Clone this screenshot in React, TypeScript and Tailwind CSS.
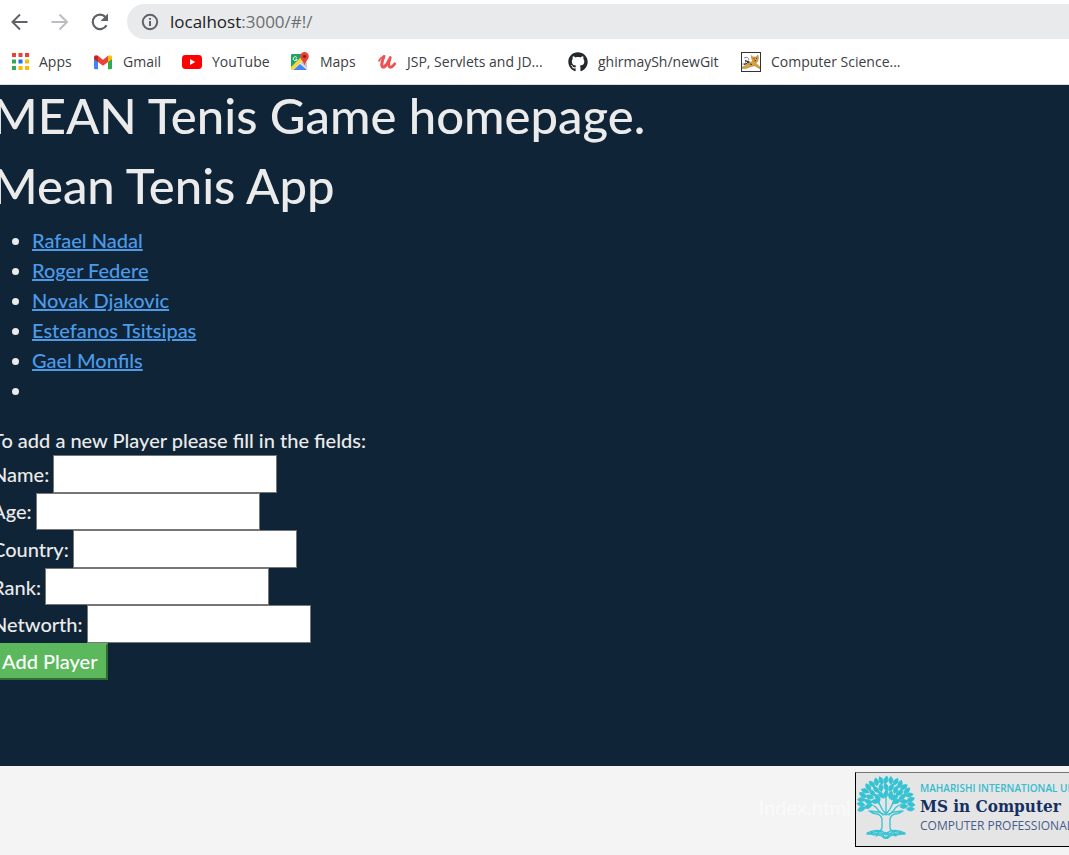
import React from "react";
import { FaGithub } from "react-icons/fa";

const APP_DOTS = [
  "#ea4335", "#ea4335", "#ea4335",
  "#34a853", "#1a73e8", "#fbbc04",
  "#34a853", "#fbbc04", "#fbbc04",
];

function AppsIcon() {
  return (
    <svg viewBox="0 0 20 20" className="size-5" aria-hidden="true">
      {APP_DOTS.map((color, i) => (
        <rect key={i} x={3 + (i % 3) * 6.5} y={1 + Math.floor(i / 3) * 6.5} width="4" height="4" fill={color} />
      ))}
    </svg>
  );
}

function GmailIcon() {
  return (
    <svg viewBox="0 0 20 20" className="size-5" aria-hidden="true">
      <path d="M1 5.5V16q0 1.2 1.2 1.2H5V9z" fill="#4285f4" />
      <path d="M19 5.5V16q0 1.2-1.2 1.2H15V9z" fill="#34a853" />
      <path d="M1 7V5.3C1 3.2 3.3 2.5 5 3.8V10z" fill="#c5221f" />
      <path d="M19 7V5.3c0-2.1-2.3-2.8-4-1.5V10z" fill="#fbbc04" />
      <path d="M5 3.8l5 3.9 5-3.9V10l-5 3.8L5 10z" fill="#ea4335" />
    </svg>
  );
}

function YoutubeIcon() {
  return (
    <svg viewBox="0 0 20 20" className="size-5" aria-hidden="true">
      <rect y="3" width="20" height="14" rx="3.4" fill="#f00" />
      <path d="M8 7v6l5.3-3z" fill="#fff" />
    </svg>
  );
}

function MapsIcon() {
  return (
    <svg viewBox="0 0 20 20" className="size-5" aria-hidden="true">
      <rect x="1" y="2" width="16" height="16" rx="1.5" fill="#e3e5e8" />
      <path d="M2.500 2H14L1 15V3.500Q1 2 2.500 2z" fill="#1fa463" />
      <path d="M1 15L13 3l2.500 2.500L3 18Q1 18 1 16.500z" fill="#fdd835" />
      <path d="M1 3.500Q1 2 2.500 2H14L1 15z" fill="#1fa463" />
      <path d="M3.500 18L10 12l7 6z" fill="#4285f4" />
      <path d="M11 11l3-3 3 3v5z" fill="#c5c8cc" />
      <path d="M6.900 5.600a2 2 0 1 0 .3 1.600H5.300" fill="none" stroke="#fff" strokeWidth="0.900" />
      <path d="M14.500 0a4.300 4.300 0 0 0-4.300 4.300c0 3.200 3.300 4.700 4.300 9.200 1-4.500 4.300-6 4.300-9.200A4.300 4.300 0 0 0 14.500 0z" fill="#ea4335" />
      <circle cx="14.500" cy="4.400" r="1.600" fill="#8c1b16" />
    </svg>
  );
}

function UdemyIcon() {
  return (
    <svg viewBox="0 0 20 20" className="size-5" aria-hidden="true">
      <g fill="none" stroke="#eb5252" strokeLinecap="round" strokeLinejoin="round">
        <path d="M2 8.800Q3.500 5.500 6.500 4.500" strokeWidth="1.800" />
        <path d="M7 4.500C5.500 8 4.600 11 4.800 13.500c.3 3.200 4.400 1.600 7.200-5.500" strokeWidth="3" />
        <path d="M13.300 5.500c-1.300 4-2.300 8-1 9.300 1.300 1.200 3.700-.5 5.500-3" strokeWidth="2.800" />
      </g>
    </svg>
  );
}

function TomcatIcon() {
  return (
    <svg viewBox="0 0 20 20" className="size-5" aria-hidden="true">
      <rect x="0.500" y="0.500" width="19" height="19" fill="#fff" stroke="#333" />
      <path d="M3 6c3-1.500 5.500 0 4.500 2.500M1 12c2.500.5 4-1 3.500-3" fill="none" stroke="#888" strokeWidth="1" />
      <path d="M4 8.500l4 1.500-2 1M3 12.500l3-1" fill="none" stroke="#222" strokeWidth="1.200" />
      <path d="M10.500 6l-.3-2.500L12 5h3l2-2 .5 3-.8 3.500-2 1.500 4.300 4v1.700l-5.500-3-4 1L5 16.500H1.200V15L5 13.500l1.500-2 4-1.500 1-1z" fill="#dba23a" stroke="#80612a" strokeWidth="0.400" />
      <path d="M12.500 6.500l1 .5M15 6.500l1-.3M13.500 9l1.500-.5M9 12l2 .5" fill="none" stroke="#302718" strokeWidth="0.900" />
    </svg>
  );
}

const BOOKMARKS: { label: string; icon: React.ReactNode; width: string }[] = [
  { label: "Apps", icon: <AppsIcon />, width: "w-16" },
  { label: "Gmail", icon: <GmailIcon />, width: "w-[69px]" },
  { label: "YouTube", icon: <YoutubeIcon />, width: "w-[88px]" },
  { label: "Maps", icon: <MapsIcon />, width: "w-[67px]" },
  { label: "JSP, Servlets and JD...", icon: <UdemyIcon />, width: "w-[171px]" },
  { label: "ghirmaySh/newGit", icon: <FaGithub className="size-5 text-[#24292e]" aria-hidden="true" />, width: "w-[153px]" },
  { label: "Computer Science...", icon: <TomcatIcon />, width: "w-[162px]" },
];

function BrowserBar() {
  return (
    <header className="border-b border-[#dadce0] bg-white">
      <div className="flex items-center pt-1 pl-2">
        <nav className="flex w-[119px] items-center gap-4" aria-label="History">
          <button type="button" aria-label="Back" className="flex size-6 items-center justify-center text-[#5f6368]">
            <svg viewBox="0 0 24 24" className="size-6" fill="none" stroke="currentColor" strokeWidth="2"><path d="M19.500 12H5M12 4.500L4.500 12l7.500 7.500" /></svg>
          </button>
          <button type="button" aria-label="Forward" disabled className="flex size-6 items-center justify-center text-[#bbbdc0]">
            <svg viewBox="0 0 24 24" className="size-6" fill="none" stroke="currentColor" strokeWidth="2"><path d="M3.500 12H18M11.500 4.500L19 12l-7.500 7.500" /></svg>
          </button>
          <button type="button" aria-label="Reload" className="flex size-6 items-center justify-center text-[#5f6368]">
            <svg viewBox="0 0 24 24" className="size-6" fill="none" stroke="currentColor" strokeWidth="2.200">
              <path d="M18.500 15.200a7.300 7.300 0 1 1-1-8.200" />
              <path d="M20 3.500V11h-7.500z" fill="currentColor" stroke="none" />
            </svg>
          </button>
        </nav>
        <div className="flex h-[35px] flex-1 items-center gap-[11px] rounded-l-full bg-[#e9eaeb] pl-[14px]">
          <svg viewBox="0 0 18 18" className="size-[18px]" fill="none" stroke="#5f6368" strokeWidth="2" aria-hidden="true">
            <circle cx="9" cy="9" r="7.200" />
            <path d="M9 8v5M9 5v1.800" />
          </svg>
          <p className="font-['Open_Sans',sans-serif] text-[17px] leading-6 text-[#6b6e72]">
            <span className="text-[#202124]">localhost</span>:3000/#!/
          </p>
        </div>
      </div>
      <nav aria-label="Bookmarks" className="flex h-[45px] items-center gap-5 pl-[9px]">
        {BOOKMARKS.map((item) => (
          <a key={item.label} href="#" className={`flex shrink-0 items-center gap-[10px] ${item.width}`}>
            <span className="shrink-0">{item.icon}</span>
            <span className="font-['Open_Sans',sans-serif] text-sm whitespace-nowrap text-[#3c4043]">{item.label}</span>
          </a>
        ))}
      </nav>
    </header>
  );
}

const PLAYERS = ["Rafael Nadal", "Roger Federe", "Novak Djakovic", "Estefanos Tsitsipas", "Gael Monfils", ""];
const FIELDS = ["Name", "Age", "Country", "Rank", "Networth"];

const LEAF_RINGS = [
  { radius: 24, count: 19, from: -192, to: 12, length: 8 },
  { radius: 17, count: 13, from: -188, to: 8, length: 8 },
  { radius: 10, count: 7, from: -165, to: -15, length: 8 },
];

function TreeLogo() {
  return (
    <svg viewBox="0 0 60 64" className="h-16 w-[60px] shrink-0" aria-hidden="true">
      {LEAF_RINGS.map((ring) =>
        Array.from({ length: ring.count }, (_, i) => {
          const angle = ring.from + ((ring.to - ring.from) * i) / (ring.count - 1);
          const rad = (angle * Math.PI) / 180;
          const x = 30 + Math.cos(rad) * (ring.radius + 1);
          const y = 29 + Math.sin(rad) * ring.radius;
          const tilt = i % 2 ? 12 : -12;
          return (
            <path
              key={`${ring.radius}-${i}`}
              d={`M${-ring.length / 2} 0Q0 -4 ${ring.length / 2} 0Q0 4 ${-ring.length / 2} 0z`}
              transform={`translate(${x} ${y}) rotate(${angle + tilt})`}
              fill="#35c3d3"
              stroke="#35c3d3"
              strokeWidth="0.900"
            />
          );
        })
      )}
      <g fill="none" stroke="#35c3d3" strokeWidth="1.300" strokeLinecap="round" strokeLinejoin="round">
        <path d="M13 36q4 3 8 3 4 1 5 5v9q-1 4-8 4-4 1-7 2h38q-3-1-7-2-7 0-8-4v-9q1-4 5-5 4 0 8-3l-9 1-8 3-8-3z" fill="#e5e5e5" />
        <path d="M14 29q6 2 8 6l5 5M46 29q-6 2-8 6l-5 5M22 20q0 10 7 18M38 20q0 10-7 18M30 14v25M18 25q5 2 7 7M42 25q-5 2-7 7" />
        <path d="M11 58q8-4 14-2l5 2 5-2q6-2 14 2M15 59q4 2 7-1t5 2 6 0 5-2 7 1M20 61q4-2 7 1t6 0 7-1M26 56l4 4 4-4" />
      </g>
    </svg>
  );
}

export default function App() {
  return (
    <div className="flex min-h-screen flex-col overflow-hidden bg-[#102437] font-['Lato',sans-serif] text-xl leading-[30px] font-medium text-[#ebebeb]">
      <BrowserBar />
      <main className="-ml-2 flex-1 pb-10">
        <h1 className="mb-[10px] text-[49px] leading-[60px]">MEAN Tenis Game homepage.</h1>
        <h1 className="mb-[10px] text-[49px] leading-[60px]">Mean Tenis App</h1>
        <ul className="mb-5 list-disc pl-10">
          {PLAYERS.map((name) => (
            <li key={name} className="h-[30px]">
              {name && <a href="#" className="text-[#4c9be8] underline">{name}</a>}
            </li>
          ))}
        </ul>
        <form onSubmit={(event) => event.preventDefault()}>
          <p>To add a new Player please fill in the fields:</p>
          <div className="grid h-[188px] grid-rows-5">
            {FIELDS.map((field) => (
              <div key={field} className="flex items-center gap-1">
                <label htmlFor={field}>{field}:</label>
                <input id={field} type="text" className="h-full w-56 border border-[#767676] bg-white px-1 text-black" />
              </div>
            ))}
          </div>
          <button type="submit" className="border-2 border-t-[#5cb85c] border-r-[#2f6b32] border-b-[#2f6b32] border-l-[#5cb85c] bg-[#5cb85c] px-2 leading-[33px] text-white">
            Add Player
          </button>
        </form>
      </main>
      <footer className="flex h-[89px] items-center justify-end bg-[#f4f4f4] font-normal">
        <p className="mr-1 pb-2 text-[#fafafa]">Index.html</p>
        <div className="mb-2 flex h-[75px] w-[214px] shrink-0 items-start self-end overflow-hidden border border-r-0 border-t-[#767676] border-b-black border-l-black bg-[#e5e5e5] pt-[2px] whitespace-nowrap">
          <TreeLogo />
          <div className="pt-[5px] pl-1 font-['Open_Sans',sans-serif]">
            <p className="text-[10px] leading-4 font-semibold text-[#35bccd]">MAHARISHI INTERNATIONAL UN</p>
            <p className="font-['DejaVu_Serif_Condensed','DejaVu_Serif',serif] text-[17px] leading-5 font-bold text-[#142f63]">MS in Computer</p>
            <p className="text-xs leading-5 text-[#465c8c]">COMPUTER PROFESSIONAL</p>
          </div>
        </div>
      </footer>
    </div>
  );
}
